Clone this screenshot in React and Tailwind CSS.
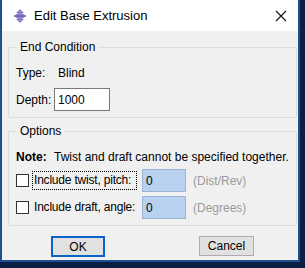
export default function App() {
    const font = { fontFamily: '"Liberation Sans", Arial, sans-serif' };
    return (
        <div className="w-[305px] h-[268px] bg-[#0b1f45] overflow-hidden" style={font}>
            <div className="w-[300px] h-[262px] bg-[#f0f0f0] border-l-2 border-r-2 border-b-2 border-[#1d4f91] flex flex-col text-[12px] text-black whitespace-nowrap">
                {/* title bar */}
                <div className="h-[31px] shrink-0 bg-white flex items-center pl-[10px] pr-[8px]">
                    <svg width="16" height="16" viewBox="0 0 16 16" className="shrink-0">
                        <path d="M8 1 L12 5 L10 5 L14 8 L10 11 L12 11 L8 15 L4 11 L6 11 L2 8 L6 5 L4 5 Z" fill="#8b85c8" />
                        <path d="M2 8 L14 8" stroke="#5c57a0" strokeWidth="1" />
                    </svg>
                    <span className="ml-[6px] text-[13px]">Edit Base Extrusion</span>
                    <svg width="12" height="12" viewBox="0 0 12 12" className="ml-auto mr-[3px]">
                        <path d="M1 1 L11 11 M11 1 L1 11" stroke="#111" strokeWidth="1.1" />
                    </svg>
                </div>

                <div className="pl-[6px] pt-[9px] flex flex-col">
                    {/* End Condition */}
                    <fieldset className="w-[289px] border border-[#dcdcdc] rounded-[2px] px-[7px] h-[78px]">
                        <legend className="px-[3px] ml-[1px] leading-[14px]">End Condition</legend>
                        <div className="flex items-center h-[20px] mt-[9px]">
                            <span className="w-[42px]">Type:</span>
                            <span>Blind</span>
                        </div>
                        <div className="flex items-center mt-[5px]">
                            <span className="w-[38px]">Depth:</span>
                            <div className="w-[56px] h-[23px] border border-[#7a7a7a] bg-white flex items-center pl-[3px]">1000</div>
                        </div>
                    </fieldset>

                    {/* Options */}
                    <fieldset className="w-[289px] mt-[6px] border border-[#dcdcdc] rounded-[2px] px-[7px] h-[102px]">
                        <legend className="px-[3px] ml-[1px] leading-[14px]">Options</legend>
                        <div className="flex items-center mt-[10px] h-[18px]">
                            <span className="font-bold w-[38px]">Note:</span>
                            <span>Twist and draft cannot be specified together.</span>
                        </div>
                        <div className="flex items-center mt-[3px] h-[23px]">
                            <div className="w-[13px] h-[13px] border border-[#333] bg-white shrink-0" />
                            <span className="ml-[3px] w-[105px] px-[1px] border border-dotted border-black leading-[17px] tracking-[-0.2px]">Include twist, pitch:</span>
                            <div className="ml-[5px] w-[44px] h-[23px] bg-[#b7d1ee] border border-[#9ab6d6] flex items-center pl-[3px]">0</div>
                            <span className="ml-[7px] text-[#9a9a9a]">(Dist/Rev)</span>
                        </div>
                        <div className="flex items-center mt-[4px] h-[23px]">
                            <div className="w-[13px] h-[13px] border border-[#333] bg-white shrink-0" />
                            <span className="ml-[3px] w-[105px] px-[1px] border border-transparent leading-[17px] tracking-[-0.2px]">Include draft, angle:</span>
                            <div className="ml-[5px] w-[44px] h-[23px] bg-[#b7d1ee] border border-[#9ab6d6] flex items-center pl-[3px]">0</div>
                            <span className="ml-[7px] text-[#9a9a9a]">(Degrees)</span>
                        </div>
                    </fieldset>

                    {/* buttons */}
                    <div className="flex mt-[10px]">
                        <button className="ml-[43px] w-[54px] h-[21px] bg-[#e1e1e1] border-2 border-[#0a64c8] flex items-center justify-center">OK</button>
                        <button className="ml-[94px] w-[55px] h-[20px] bg-[#e1e1e1] border border-[#adadad] flex items-center justify-center">Cancel</button>
                    </div>
                </div>
            </div>
        </div>
    );
}
